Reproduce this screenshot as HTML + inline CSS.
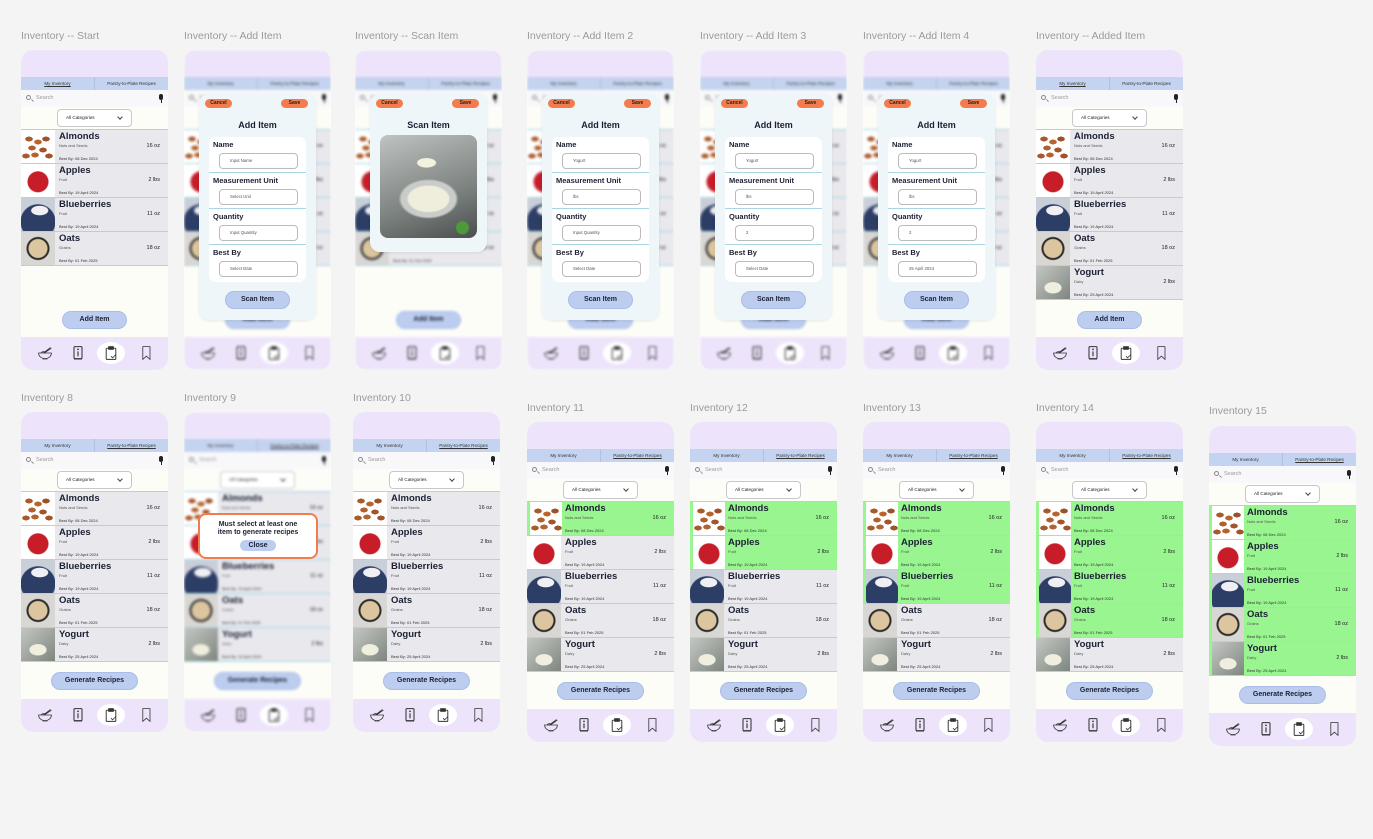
<!DOCTYPE html>
<html><head><meta charset="utf-8">
<style>
*{margin:0;padding:0;box-sizing:border-box}
body{width:1373px;height:839px;background:#f4f4f4;position:relative;overflow:hidden;font-family:"Liberation Sans",sans-serif;color:#1c2033}
.lb{position:absolute;font-size:10.5px;color:#9b9b9b;white-space:nowrap}
.f{position:absolute;width:147px;height:320px;border-radius:12px;overflow:hidden;background:#fdfdf8}
.c{position:absolute;inset:0}
.blur{filter:blur(1.3px)}
.top{position:absolute;left:0;top:0;width:147px;height:27px;background:#ede4fb}
.tabs{position:absolute;left:0;top:27px;width:147px;height:13px;background:#c4d3ef;display:flex;font-size:4.6px;color:#333}
.tabs span{flex:1;text-align:center;line-height:13px}
.tabs span+span{border-left:1px solid #b0c0e4}
.tabs .on{text-decoration:underline}
.sr{position:absolute;left:0;top:40px;width:147px;height:17px;background:#f8f8fa;font-size:5.5px;color:#999;line-height:17px;padding-left:15px}
.mg{position:absolute;left:5px;top:5px;width:5px;height:5px;border:1px solid #888;border-radius:50%}
.mg:after{content:"";position:absolute;left:4px;top:4px;width:3px;height:1px;background:#888;transform:rotate(45deg)}
.mic{position:absolute;right:5px;top:4px;width:4px;height:6px;background:#222;border-radius:2px}
.mic:after{content:"";position:absolute;left:1.5px;top:6px;width:1px;height:3px;background:#222}
.dd{position:absolute;left:36px;top:59px;width:75px;height:18px;background:#fff;border:1px solid #c8c8cc;border-radius:4px;font-size:4.6px;line-height:16px;padding-left:8px;color:#222}
.dd:after{content:"";position:absolute;right:9px;top:5px;width:3px;height:3px;border-right:1px solid #444;border-bottom:1px solid #444;transform:rotate(45deg)}
.ls{position:absolute;left:0;top:79px;width:147px;border-top:1px solid #a9d6e4}
.r{position:relative;height:34px;border-bottom:1px solid #a9d6e4;background:#e8e8ed}
.r.g{background:#98f590}
.r b{position:absolute;left:38px;top:1px;font-size:9.5px;font-weight:bold;color:#1c2033}
.r s,.r u{text-decoration:none;position:absolute;left:38px;font-size:4px;color:#555}
.r s{top:13px}.r u{bottom:2px;color:#333}
.r em{font-style:normal;position:absolute;right:8px;top:13px;font-size:5.5px;color:#222}
.im{position:absolute;left:0;top:0;width:34px;height:33px;background:#fff}
.g .im{left:3px;width:32px}
.a{background:radial-gradient(ellipse 4px 2.5px at 8px 9px,#a9592a 90%,transparent),radial-gradient(ellipse 4px 2.5px at 17px 12px,#b8642c 90%,transparent),radial-gradient(ellipse 4px 2.5px at 25px 9px,#9e5128 90%,transparent),radial-gradient(ellipse 4px 2.5px at 11px 18px,#b0602c 90%,transparent),radial-gradient(ellipse 4px 2.5px at 22px 20px,#a2552a 90%,transparent),radial-gradient(ellipse 4px 2.5px at 14px 25px,#b4632e 90%,transparent),radial-gradient(ellipse 4px 2.5px at 28px 26px,#a0542a 90%,transparent),radial-gradient(ellipse 4px 2.5px at 5px 26px,#a9592a 90%,transparent),#fff}
.ap{background:radial-gradient(circle at 50% 54%,#c61d29 0 10px,#fff 11px)}
.bl{background:radial-gradient(ellipse 9px 5px at 55% 38%,#f0f0f4 90%,transparent),radial-gradient(circle at 50% 72%,#2c3d66 0 17px,#c9cfd9 18px)}
.oa{background:radial-gradient(circle at 50% 50%,#dcc69f 0 9px,#2a2a2a 10px 11px,#d9d7d4 12px)}
.yo{background:radial-gradient(ellipse 9px 6px at 50% 66%,#f0efdf 90%,transparent),linear-gradient(135deg,#c3c7c3,#7f8680)}
.btn{position:absolute;top:261px;height:18px;left:41px;width:65px;border-radius:9px;background:#bccdf0;border:1px solid #a9bde6;font-size:7px;font-weight:bold;text-align:center;line-height:16px;color:#1c2033}
.gen{left:30px;width:87px;top:260px}
.nav{position:absolute;left:0;top:287px;width:147px;height:33px;background:#ede4fb}
.ci{position:absolute;left:76px;top:5px;width:28px;height:22px;border-radius:50%;background:#fff}
.nav svg{position:absolute;top:8px;width:16px;height:16px;fill:none;stroke:#333;stroke-width:1}
.m{position:absolute;left:15px;top:44px;width:117px;height:226px;background:#eef6fa;border-radius:10px;box-shadow:0 1px 3px rgba(0,0,0,.08)}
.cb,.sb{position:absolute;top:5px;height:9px;background:#f47c4c;border-radius:5px;font-size:5px;font-weight:bold;line-height:9px;text-align:center;color:#222}
.cb{left:6px;width:27px}.sb{right:8px;width:27px}
.mt{position:absolute;left:0;right:0;top:26px;text-align:center;font-size:9px;font-weight:bold}
.card{position:absolute;left:10px;top:43px;width:97px;height:145px;background:#fff;border-radius:7px}
.sec{position:relative;height:36px;border-bottom:1px solid #a9d6e4}
.sec:last-child{border-bottom:0}
.sec b{position:absolute;left:4px;top:3px;font-size:7.5px;font-weight:bold}
.sec i{position:absolute;left:10px;top:16px;width:79px;height:16px;border:1px solid #bbb;border-radius:4px;font-style:normal;font-size:4.3px;line-height:14px;padding-left:10px;color:#555}
.sc{position:absolute;left:26px;top:197px;width:65px;height:18px;border-radius:9px;background:#bccdf0;border:1px solid #a9bde6;font-size:7px;font-weight:bold;text-align:center;line-height:16px}
</style></head><body>
<svg width="0" height="0" style="position:absolute">
<symbol id="bowl" viewBox="0 0 20 20"><path d="M2 10h16c0 4-3.5 7-8 7s-8-3-8-7z"/><path d="M7 17.5h6"/><path d="M8 10l9-7M9 10l9-6"/><path d="M5 10c1-2 4-2 6-1"/></symbol>
<symbol id="book" viewBox="0 0 20 20"><rect x="5" y="2" width="10" height="15" rx="1" stroke-width="1.3"/><path d="M5 17.5h10" stroke-width="1.3"/><path d="M10 8v6" stroke-width="1.4"/><circle cx="10" cy="5.5" r=".6" fill="#333"/></symbol>
<symbol id="clip" viewBox="0 0 20 20"><rect x="4" y="4" width="12" height="14" rx="1" stroke-width="1.2"/><rect x="7" y="2" width="6" height="3.5" fill="#333"/><path d="M10 14l2 2 4-4"/></symbol>
<symbol id="mark" viewBox="0 0 20 20"><path d="M6 2h9v16l-4.5-4-4.5 4z"/></symbol>
</svg>

<!-- ROW 1 -->
<div class="lb" style="left:21px;top:30px">Inventory -- Start</div>
<div class="f" style="left:21px;top:50px"><div class="c">
<div class="top"></div><div class="tabs"><span class="on">My Inventory</span><span>Pantry-to-Plate Recipes</span></div><div class="sr"><i class="mg"></i>Search<i class="mic"></i></div><div class="dd">All Categories</div>
<div class="ls">
<div class="r"><i class="im a"></i><b>Almonds</b><s>Nuts and Seeds</s><u>Best By: 08 Dec 2024</u><em>16 oz</em></div>
<div class="r"><i class="im ap"></i><b>Apples</b><s>Fruit</s><u>Best By: 19 April 2024</u><em>2 lbs</em></div>
<div class="r"><i class="im bl"></i><b>Blueberries</b><s>Fruit</s><u>Best By: 19 April 2024</u><em>11 oz</em></div>
<div class="r"><i class="im oa"></i><b>Oats</b><s>Grains</s><u>Best By: 01 Feb 2025</u><em>18 oz</em></div>
</div>
<div class="btn">Add Item</div>
<div class="nav"><i class="ci"></i><svg style="left:16px"><use href="#bowl"/></svg><svg style="left:49px"><use href="#book"/></svg><svg style="left:82px"><use href="#clip"/></svg><svg style="left:117px"><use href="#mark"/></svg></div>
</div></div>

<div class="lb" style="left:184px;top:30px">Inventory -- Add Item</div>
<div class="f" style="left:184px;top:50px"><div class="c blur">
<div class="top"></div><div class="tabs"><span>My Inventory</span><span>Pantry-to-Plate Recipes</span></div><div class="sr"><i class="mg"></i>Search<i class="mic"></i></div><div class="dd">All Categories</div>
<div class="ls">
<div class="r"><i class="im a"></i><b>Almonds</b><s>Nuts and Seeds</s><u>Best By: 08 Dec 2024</u><em>16 oz</em></div>
<div class="r"><i class="im ap"></i><b>Apples</b><s>Fruit</s><u>Best By: 19 April 2024</u><em>2 lbs</em></div>
<div class="r"><i class="im bl"></i><b>Blueberries</b><s>Fruit</s><u>Best By: 19 April 2024</u><em>11 oz</em></div>
<div class="r"><i class="im oa"></i><b>Oats</b><s>Grains</s><u>Best By: 01 Feb 2025</u><em>18 oz</em></div>
</div>
<div class="btn">Add Item</div>
<div class="nav"><i class="ci"></i><svg style="left:16px"><use href="#bowl"/></svg><svg style="left:49px"><use href="#book"/></svg><svg style="left:82px"><use href="#clip"/></svg><svg style="left:117px"><use href="#mark"/></svg></div>
</div>
<div class="m"><div class="cb">Cancel</div><div class="sb">Save</div><div class="mt">Add Item</div>
<div class="card"><div class="sec"><b>Name</b><i>Input Name</i></div><div class="sec"><b>Measurement Unit</b><i>Select Unit</i></div><div class="sec"><b>Quantity</b><i>Input Quantity</i></div><div class="sec"><b>Best By</b><i>Select Date</i></div></div>
<div class="sc">Scan Item</div></div>
</div>

<div class="lb" style="left:355px;top:30px">Inventory -- Scan Item</div>
<div class="f" style="left:355px;top:50px"><div class="c blur">
<div class="top"></div><div class="tabs"><span>My Inventory</span><span>Pantry-to-Plate Recipes</span></div><div class="sr"><i class="mg"></i>Search<i class="mic"></i></div><div class="dd">All Categories</div>
<div class="ls">
<div class="r"><i class="im a"></i><b>Almonds</b><s>Nuts and Seeds</s><u>Best By: 08 Dec 2024</u><em>16 oz</em></div>
<div class="r"><i class="im ap"></i><b>Apples</b><s>Fruit</s><u>Best By: 19 April 2024</u><em>2 lbs</em></div>
<div class="r"><i class="im bl"></i><b>Blueberries</b><s>Fruit</s><u>Best By: 19 April 2024</u><em>11 oz</em></div>
<div class="r"><i class="im oa"></i><b>Oats</b><s>Grains</s><u>Best By: 01 Feb 2025</u><em>18 oz</em></div>
</div>
<div class="btn">Add Item</div>
<div class="nav"><i class="ci"></i><svg style="left:16px"><use href="#bowl"/></svg><svg style="left:49px"><use href="#book"/></svg><svg style="left:82px"><use href="#clip"/></svg><svg style="left:117px"><use href="#mark"/></svg></div>
</div>
<div class="m" style="height:158px"><div class="cb">Cancel</div><div class="sb">Save</div><div class="mt">Scan Item</div>
<div style="position:absolute;left:10px;top:41px;width:97px;height:103px;border-radius:8px;background:radial-gradient(ellipse 10px 5px at 48% 27%,#f3f1e0 90%,transparent),radial-gradient(ellipse 22px 14px at 50% 62%,#efeedd 90%,transparent),radial-gradient(ellipse 30px 20px at 50% 62%,#c9ccc9 90%,transparent),radial-gradient(circle at 85% 90%,#4c9a3a 0 6px,transparent 7px),linear-gradient(160deg,#bfc3c1,#7d8380 60%,#4a4f4d)"></div></div>
</div>

<div class="lb" style="left:527px;top:30px">Inventory -- Add Item 2</div>
<div class="f" style="left:527px;top:50px"><div class="c blur">
<div class="top"></div><div class="tabs"><span>My Inventory</span><span>Pantry-to-Plate Recipes</span></div><div class="sr"><i class="mg"></i>Search<i class="mic"></i></div><div class="dd">All Categories</div>
<div class="ls">
<div class="r"><i class="im a"></i><b>Almonds</b><s>Nuts and Seeds</s><u>Best By: 08 Dec 2024</u><em>16 oz</em></div>
<div class="r"><i class="im ap"></i><b>Apples</b><s>Fruit</s><u>Best By: 19 April 2024</u><em>2 lbs</em></div>
<div class="r"><i class="im bl"></i><b>Blueberries</b><s>Fruit</s><u>Best By: 19 April 2024</u><em>11 oz</em></div>
<div class="r"><i class="im oa"></i><b>Oats</b><s>Grains</s><u>Best By: 01 Feb 2025</u><em>18 oz</em></div>
</div>
<div class="btn">Add Item</div>
<div class="nav"><i class="ci"></i><svg style="left:16px"><use href="#bowl"/></svg><svg style="left:49px"><use href="#book"/></svg><svg style="left:82px"><use href="#clip"/></svg><svg style="left:117px"><use href="#mark"/></svg></div>
</div>
<div class="m"><div class="cb">Cancel</div><div class="sb">Save</div><div class="mt">Add Item</div>
<div class="card"><div class="sec"><b>Name</b><i>Yogurt</i></div><div class="sec"><b>Measurement Unit</b><i>lbs</i></div><div class="sec"><b>Quantity</b><i>Input Quantity</i></div><div class="sec"><b>Best By</b><i>Select Date</i></div></div>
<div class="sc">Scan Item</div></div>
</div>

<div class="lb" style="left:700px;top:30px">Inventory -- Add Item 3</div>
<div class="f" style="left:700px;top:50px"><div class="c blur">
<div class="top"></div><div class="tabs"><span>My Inventory</span><span>Pantry-to-Plate Recipes</span></div><div class="sr"><i class="mg"></i>Search<i class="mic"></i></div><div class="dd">All Categories</div>
<div class="ls">
<div class="r"><i class="im a"></i><b>Almonds</b><s>Nuts and Seeds</s><u>Best By: 08 Dec 2024</u><em>16 oz</em></div>
<div class="r"><i class="im ap"></i><b>Apples</b><s>Fruit</s><u>Best By: 19 April 2024</u><em>2 lbs</em></div>
<div class="r"><i class="im bl"></i><b>Blueberries</b><s>Fruit</s><u>Best By: 19 April 2024</u><em>11 oz</em></div>
<div class="r"><i class="im oa"></i><b>Oats</b><s>Grains</s><u>Best By: 01 Feb 2025</u><em>18 oz</em></div>
</div>
<div class="btn">Add Item</div>
<div class="nav"><i class="ci"></i><svg style="left:16px"><use href="#bowl"/></svg><svg style="left:49px"><use href="#book"/></svg><svg style="left:82px"><use href="#clip"/></svg><svg style="left:117px"><use href="#mark"/></svg></div>
</div>
<div class="m"><div class="cb">Cancel</div><div class="sb">Save</div><div class="mt">Add Item</div>
<div class="card"><div class="sec"><b>Name</b><i>Yogurt</i></div><div class="sec"><b>Measurement Unit</b><i>lbs</i></div><div class="sec"><b>Quantity</b><i>2</i></div><div class="sec"><b>Best By</b><i>Select Date</i></div></div>
<div class="sc">Scan Item</div></div>
</div>

<div class="lb" style="left:863px;top:30px">Inventory -- Add Item 4</div>
<div class="f" style="left:863px;top:50px"><div class="c blur">
<div class="top"></div><div class="tabs"><span>My Inventory</span><span>Pantry-to-Plate Recipes</span></div><div class="sr"><i class="mg"></i>Search<i class="mic"></i></div><div class="dd">All Categories</div>
<div class="ls">
<div class="r"><i class="im a"></i><b>Almonds</b><s>Nuts and Seeds</s><u>Best By: 08 Dec 2024</u><em>16 oz</em></div>
<div class="r"><i class="im ap"></i><b>Apples</b><s>Fruit</s><u>Best By: 19 April 2024</u><em>2 lbs</em></div>
<div class="r"><i class="im bl"></i><b>Blueberries</b><s>Fruit</s><u>Best By: 19 April 2024</u><em>11 oz</em></div>
<div class="r"><i class="im oa"></i><b>Oats</b><s>Grains</s><u>Best By: 01 Feb 2025</u><em>18 oz</em></div>
</div>
<div class="btn">Add Item</div>
<div class="nav"><i class="ci"></i><svg style="left:16px"><use href="#bowl"/></svg><svg style="left:49px"><use href="#book"/></svg><svg style="left:82px"><use href="#clip"/></svg><svg style="left:117px"><use href="#mark"/></svg></div>
</div>
<div class="m"><div class="cb">Cancel</div><div class="sb">Save</div><div class="mt">Add Item</div>
<div class="card"><div class="sec"><b>Name</b><i>Yogurt</i></div><div class="sec"><b>Measurement Unit</b><i>lbs</i></div><div class="sec"><b>Quantity</b><i>2</i></div><div class="sec"><b>Best By</b><i>25 April 2024</i></div></div>
<div class="sc">Scan Item</div></div>
</div>

<div class="lb" style="left:1036px;top:30px">Inventory -- Added Item</div>
<div class="f" style="left:1036px;top:50px"><div class="c">
<div class="top"></div><div class="tabs"><span class="on">My Inventory</span><span>Pantry-to-Plate Recipes</span></div><div class="sr"><i class="mg"></i>Search<i class="mic"></i></div><div class="dd">All Categories</div>
<div class="ls">
<div class="r"><i class="im a"></i><b>Almonds</b><s>Nuts and Seeds</s><u>Best By: 08 Dec 2024</u><em>16 oz</em></div>
<div class="r"><i class="im ap"></i><b>Apples</b><s>Fruit</s><u>Best By: 19 April 2024</u><em>2 lbs</em></div>
<div class="r"><i class="im bl"></i><b>Blueberries</b><s>Fruit</s><u>Best By: 19 April 2024</u><em>11 oz</em></div>
<div class="r"><i class="im oa"></i><b>Oats</b><s>Grains</s><u>Best By: 01 Feb 2025</u><em>18 oz</em></div>
<div class="r"><i class="im yo"></i><b>Yogurt</b><s>Dairy</s><u>Best By: 25 April 2024</u><em>2 lbs</em></div>
</div>
<div class="btn">Add Item</div>
<div class="nav"><i class="ci"></i><svg style="left:16px"><use href="#bowl"/></svg><svg style="left:49px"><use href="#book"/></svg><svg style="left:82px"><use href="#clip"/></svg><svg style="left:117px"><use href="#mark"/></svg></div>
</div></div>

<!-- ROW 2 -->
<div class="lb" style="left:21px;top:392px">Inventory 8</div>
<div class="f" style="left:21px;top:412px"><div class="c">
<div class="top"></div><div class="tabs"><span>My Inventory</span><span class="on">Pantry-to-Plate Recipes</span></div><div class="sr"><i class="mg"></i>Search<i class="mic"></i></div><div class="dd">All Categories</div>
<div class="ls">
<div class="r"><i class="im a"></i><b>Almonds</b><s>Nuts and Seeds</s><u>Best By: 08 Dec 2024</u><em>16 oz</em></div>
<div class="r"><i class="im ap"></i><b>Apples</b><s>Fruit</s><u>Best By: 19 April 2024</u><em>2 lbs</em></div>
<div class="r"><i class="im bl"></i><b>Blueberries</b><s>Fruit</s><u>Best By: 19 April 2024</u><em>11 oz</em></div>
<div class="r"><i class="im oa"></i><b>Oats</b><s>Grains</s><u>Best By: 01 Feb 2025</u><em>18 oz</em></div>
<div class="r"><i class="im yo"></i><b>Yogurt</b><s>Dairy</s><u>Best By: 25 April 2024</u><em>2 lbs</em></div>
</div>
<div class="btn gen">Generate Recipes</div>
<div class="nav"><i class="ci"></i><svg style="left:16px"><use href="#bowl"/></svg><svg style="left:49px"><use href="#book"/></svg><svg style="left:82px"><use href="#clip"/></svg><svg style="left:117px"><use href="#mark"/></svg></div>
</div></div>

<div class="lb" style="left:184px;top:392px">Inventory 9</div>
<div class="f" style="left:184px;top:412px"><div class="c blur">
<div class="top"></div><div class="tabs"><span>My Inventory</span><span class="on">Pantry-to-Plate Recipes</span></div><div class="sr"><i class="mg"></i>Search<i class="mic"></i></div><div class="dd">All Categories</div>
<div class="ls">
<div class="r"><i class="im a"></i><b>Almonds</b><s>Nuts and Seeds</s><u>Best By: 08 Dec 2024</u><em>16 oz</em></div>
<div class="r"><i class="im ap"></i><b>Apples</b><s>Fruit</s><u>Best By: 19 April 2024</u><em>2 lbs</em></div>
<div class="r"><i class="im bl"></i><b>Blueberries</b><s>Fruit</s><u>Best By: 19 April 2024</u><em>11 oz</em></div>
<div class="r"><i class="im oa"></i><b>Oats</b><s>Grains</s><u>Best By: 01 Feb 2025</u><em>18 oz</em></div>
<div class="r"><i class="im yo"></i><b>Yogurt</b><s>Dairy</s><u>Best By: 25 April 2024</u><em>2 lbs</em></div>
</div>
<div class="btn gen">Generate Recipes</div>
<div class="nav"><i class="ci"></i><svg style="left:16px"><use href="#bowl"/></svg><svg style="left:49px"><use href="#book"/></svg><svg style="left:82px"><use href="#clip"/></svg><svg style="left:117px"><use href="#mark"/></svg></div>
</div>
<div style="position:absolute;left:14px;top:101px;width:120px;height:46px;background:#fff;border:2px solid #f27c4e;border-radius:8px;text-align:center;font-size:7px;font-weight:bold;line-height:8px;padding-top:6px">Must select at least one<br>item to generate recipes
<div style="margin:3px auto 0;width:36px;height:11px;border-radius:6px;background:#bccdf0;line-height:11px">Close</div></div>
</div>

<div class="lb" style="left:353px;top:392px">Inventory 10</div>
<div class="f" style="left:353px;top:412px"><div class="c">
<div class="top"></div><div class="tabs"><span>My Inventory</span><span class="on">Pantry-to-Plate Recipes</span></div><div class="sr"><i class="mg"></i>Search<i class="mic"></i></div><div class="dd">All Categories</div>
<div class="ls">
<div class="r"><i class="im a"></i><b>Almonds</b><s>Nuts and Seeds</s><u>Best By: 08 Dec 2024</u><em>16 oz</em></div>
<div class="r"><i class="im ap"></i><b>Apples</b><s>Fruit</s><u>Best By: 19 April 2024</u><em>2 lbs</em></div>
<div class="r"><i class="im bl"></i><b>Blueberries</b><s>Fruit</s><u>Best By: 19 April 2024</u><em>11 oz</em></div>
<div class="r"><i class="im oa"></i><b>Oats</b><s>Grains</s><u>Best By: 01 Feb 2025</u><em>18 oz</em></div>
<div class="r"><i class="im yo"></i><b>Yogurt</b><s>Dairy</s><u>Best By: 25 April 2024</u><em>2 lbs</em></div>
</div>
<div class="btn gen">Generate Recipes</div>
<div class="nav"><i class="ci"></i><svg style="left:16px"><use href="#bowl"/></svg><svg style="left:49px"><use href="#book"/></svg><svg style="left:82px"><use href="#clip"/></svg><svg style="left:117px"><use href="#mark"/></svg></div>
</div></div>

<div class="lb" style="left:527px;top:402px">Inventory 11</div>
<div class="f" style="left:527px;top:422px"><div class="c">
<div class="top"></div><div class="tabs"><span>My Inventory</span><span class="on">Pantry-to-Plate Recipes</span></div><div class="sr"><i class="mg"></i>Search<i class="mic"></i></div><div class="dd">All Categories</div>
<div class="ls">
<div class="r g"><i class="im a"></i><b>Almonds</b><s>Nuts and Seeds</s><u>Best By: 08 Dec 2024</u><em>16 oz</em></div>
<div class="r"><i class="im ap"></i><b>Apples</b><s>Fruit</s><u>Best By: 19 April 2024</u><em>2 lbs</em></div>
<div class="r"><i class="im bl"></i><b>Blueberries</b><s>Fruit</s><u>Best By: 19 April 2024</u><em>11 oz</em></div>
<div class="r"><i class="im oa"></i><b>Oats</b><s>Grains</s><u>Best By: 01 Feb 2025</u><em>18 oz</em></div>
<div class="r"><i class="im yo"></i><b>Yogurt</b><s>Dairy</s><u>Best By: 25 April 2024</u><em>2 lbs</em></div>
</div>
<div class="btn gen">Generate Recipes</div>
<div class="nav"><i class="ci"></i><svg style="left:16px"><use href="#bowl"/></svg><svg style="left:49px"><use href="#book"/></svg><svg style="left:82px"><use href="#clip"/></svg><svg style="left:117px"><use href="#mark"/></svg></div>
</div></div>

<div class="lb" style="left:690px;top:402px">Inventory 12</div>
<div class="f" style="left:690px;top:422px"><div class="c">
<div class="top"></div><div class="tabs"><span>My Inventory</span><span class="on">Pantry-to-Plate Recipes</span></div><div class="sr"><i class="mg"></i>Search<i class="mic"></i></div><div class="dd">All Categories</div>
<div class="ls">
<div class="r g"><i class="im a"></i><b>Almonds</b><s>Nuts and Seeds</s><u>Best By: 08 Dec 2024</u><em>16 oz</em></div>
<div class="r g"><i class="im ap"></i><b>Apples</b><s>Fruit</s><u>Best By: 19 April 2024</u><em>2 lbs</em></div>
<div class="r"><i class="im bl"></i><b>Blueberries</b><s>Fruit</s><u>Best By: 19 April 2024</u><em>11 oz</em></div>
<div class="r"><i class="im oa"></i><b>Oats</b><s>Grains</s><u>Best By: 01 Feb 2025</u><em>18 oz</em></div>
<div class="r"><i class="im yo"></i><b>Yogurt</b><s>Dairy</s><u>Best By: 25 April 2024</u><em>2 lbs</em></div>
</div>
<div class="btn gen">Generate Recipes</div>
<div class="nav"><i class="ci"></i><svg style="left:16px"><use href="#bowl"/></svg><svg style="left:49px"><use href="#book"/></svg><svg style="left:82px"><use href="#clip"/></svg><svg style="left:117px"><use href="#mark"/></svg></div>
</div></div>

<div class="lb" style="left:863px;top:402px">Inventory 13</div>
<div class="f" style="left:863px;top:422px"><div class="c">
<div class="top"></div><div class="tabs"><span>My Inventory</span><span class="on">Pantry-to-Plate Recipes</span></div><div class="sr"><i class="mg"></i>Search<i class="mic"></i></div><div class="dd">All Categories</div>
<div class="ls">
<div class="r g"><i class="im a"></i><b>Almonds</b><s>Nuts and Seeds</s><u>Best By: 08 Dec 2024</u><em>16 oz</em></div>
<div class="r g"><i class="im ap"></i><b>Apples</b><s>Fruit</s><u>Best By: 19 April 2024</u><em>2 lbs</em></div>
<div class="r g"><i class="im bl"></i><b>Blueberries</b><s>Fruit</s><u>Best By: 19 April 2024</u><em>11 oz</em></div>
<div class="r"><i class="im oa"></i><b>Oats</b><s>Grains</s><u>Best By: 01 Feb 2025</u><em>18 oz</em></div>
<div class="r"><i class="im yo"></i><b>Yogurt</b><s>Dairy</s><u>Best By: 25 April 2024</u><em>2 lbs</em></div>
</div>
<div class="btn gen">Generate Recipes</div>
<div class="nav"><i class="ci"></i><svg style="left:16px"><use href="#bowl"/></svg><svg style="left:49px"><use href="#book"/></svg><svg style="left:82px"><use href="#clip"/></svg><svg style="left:117px"><use href="#mark"/></svg></div>
</div></div>

<div class="lb" style="left:1036px;top:402px">Inventory 14</div>
<div class="f" style="left:1036px;top:422px"><div class="c">
<div class="top"></div><div class="tabs"><span>My Inventory</span><span class="on">Pantry-to-Plate Recipes</span></div><div class="sr"><i class="mg"></i>Search<i class="mic"></i></div><div class="dd">All Categories</div>
<div class="ls">
<div class="r g"><i class="im a"></i><b>Almonds</b><s>Nuts and Seeds</s><u>Best By: 08 Dec 2024</u><em>16 oz</em></div>
<div class="r g"><i class="im ap"></i><b>Apples</b><s>Fruit</s><u>Best By: 19 April 2024</u><em>2 lbs</em></div>
<div class="r g"><i class="im bl"></i><b>Blueberries</b><s>Fruit</s><u>Best By: 19 April 2024</u><em>11 oz</em></div>
<div class="r g"><i class="im oa"></i><b>Oats</b><s>Grains</s><u>Best By: 01 Feb 2025</u><em>18 oz</em></div>
<div class="r"><i class="im yo"></i><b>Yogurt</b><s>Dairy</s><u>Best By: 25 April 2024</u><em>2 lbs</em></div>
</div>
<div class="btn gen">Generate Recipes</div>
<div class="nav"><i class="ci"></i><svg style="left:16px"><use href="#bowl"/></svg><svg style="left:49px"><use href="#book"/></svg><svg style="left:82px"><use href="#clip"/></svg><svg style="left:117px"><use href="#mark"/></svg></div>
</div></div>

<div class="lb" style="left:1209px;top:405px">Inventory 15</div>
<div class="f" style="left:1209px;top:426px"><div class="c">
<div class="top"></div><div class="tabs"><span>My Inventory</span><span class="on">Pantry-to-Plate Recipes</span></div><div class="sr"><i class="mg"></i>Search<i class="mic"></i></div><div class="dd">All Categories</div>
<div class="ls">
<div class="r g"><i class="im a"></i><b>Almonds</b><s>Nuts and Seeds</s><u>Best By: 08 Dec 2024</u><em>16 oz</em></div>
<div class="r g"><i class="im ap"></i><b>Apples</b><s>Fruit</s><u>Best By: 19 April 2024</u><em>2 lbs</em></div>
<div class="r g"><i class="im bl"></i><b>Blueberries</b><s>Fruit</s><u>Best By: 19 April 2024</u><em>11 oz</em></div>
<div class="r g"><i class="im oa"></i><b>Oats</b><s>Grains</s><u>Best By: 01 Feb 2025</u><em>18 oz</em></div>
<div class="r g"><i class="im yo"></i><b>Yogurt</b><s>Dairy</s><u>Best By: 25 April 2024</u><em>2 lbs</em></div>
</div>
<div class="btn gen">Generate Recipes</div>
<div class="nav"><i class="ci"></i><svg style="left:16px"><use href="#bowl"/></svg><svg style="left:49px"><use href="#book"/></svg><svg style="left:82px"><use href="#clip"/></svg><svg style="left:117px"><use href="#mark"/></svg></div>
</div></div>

</body></html>
